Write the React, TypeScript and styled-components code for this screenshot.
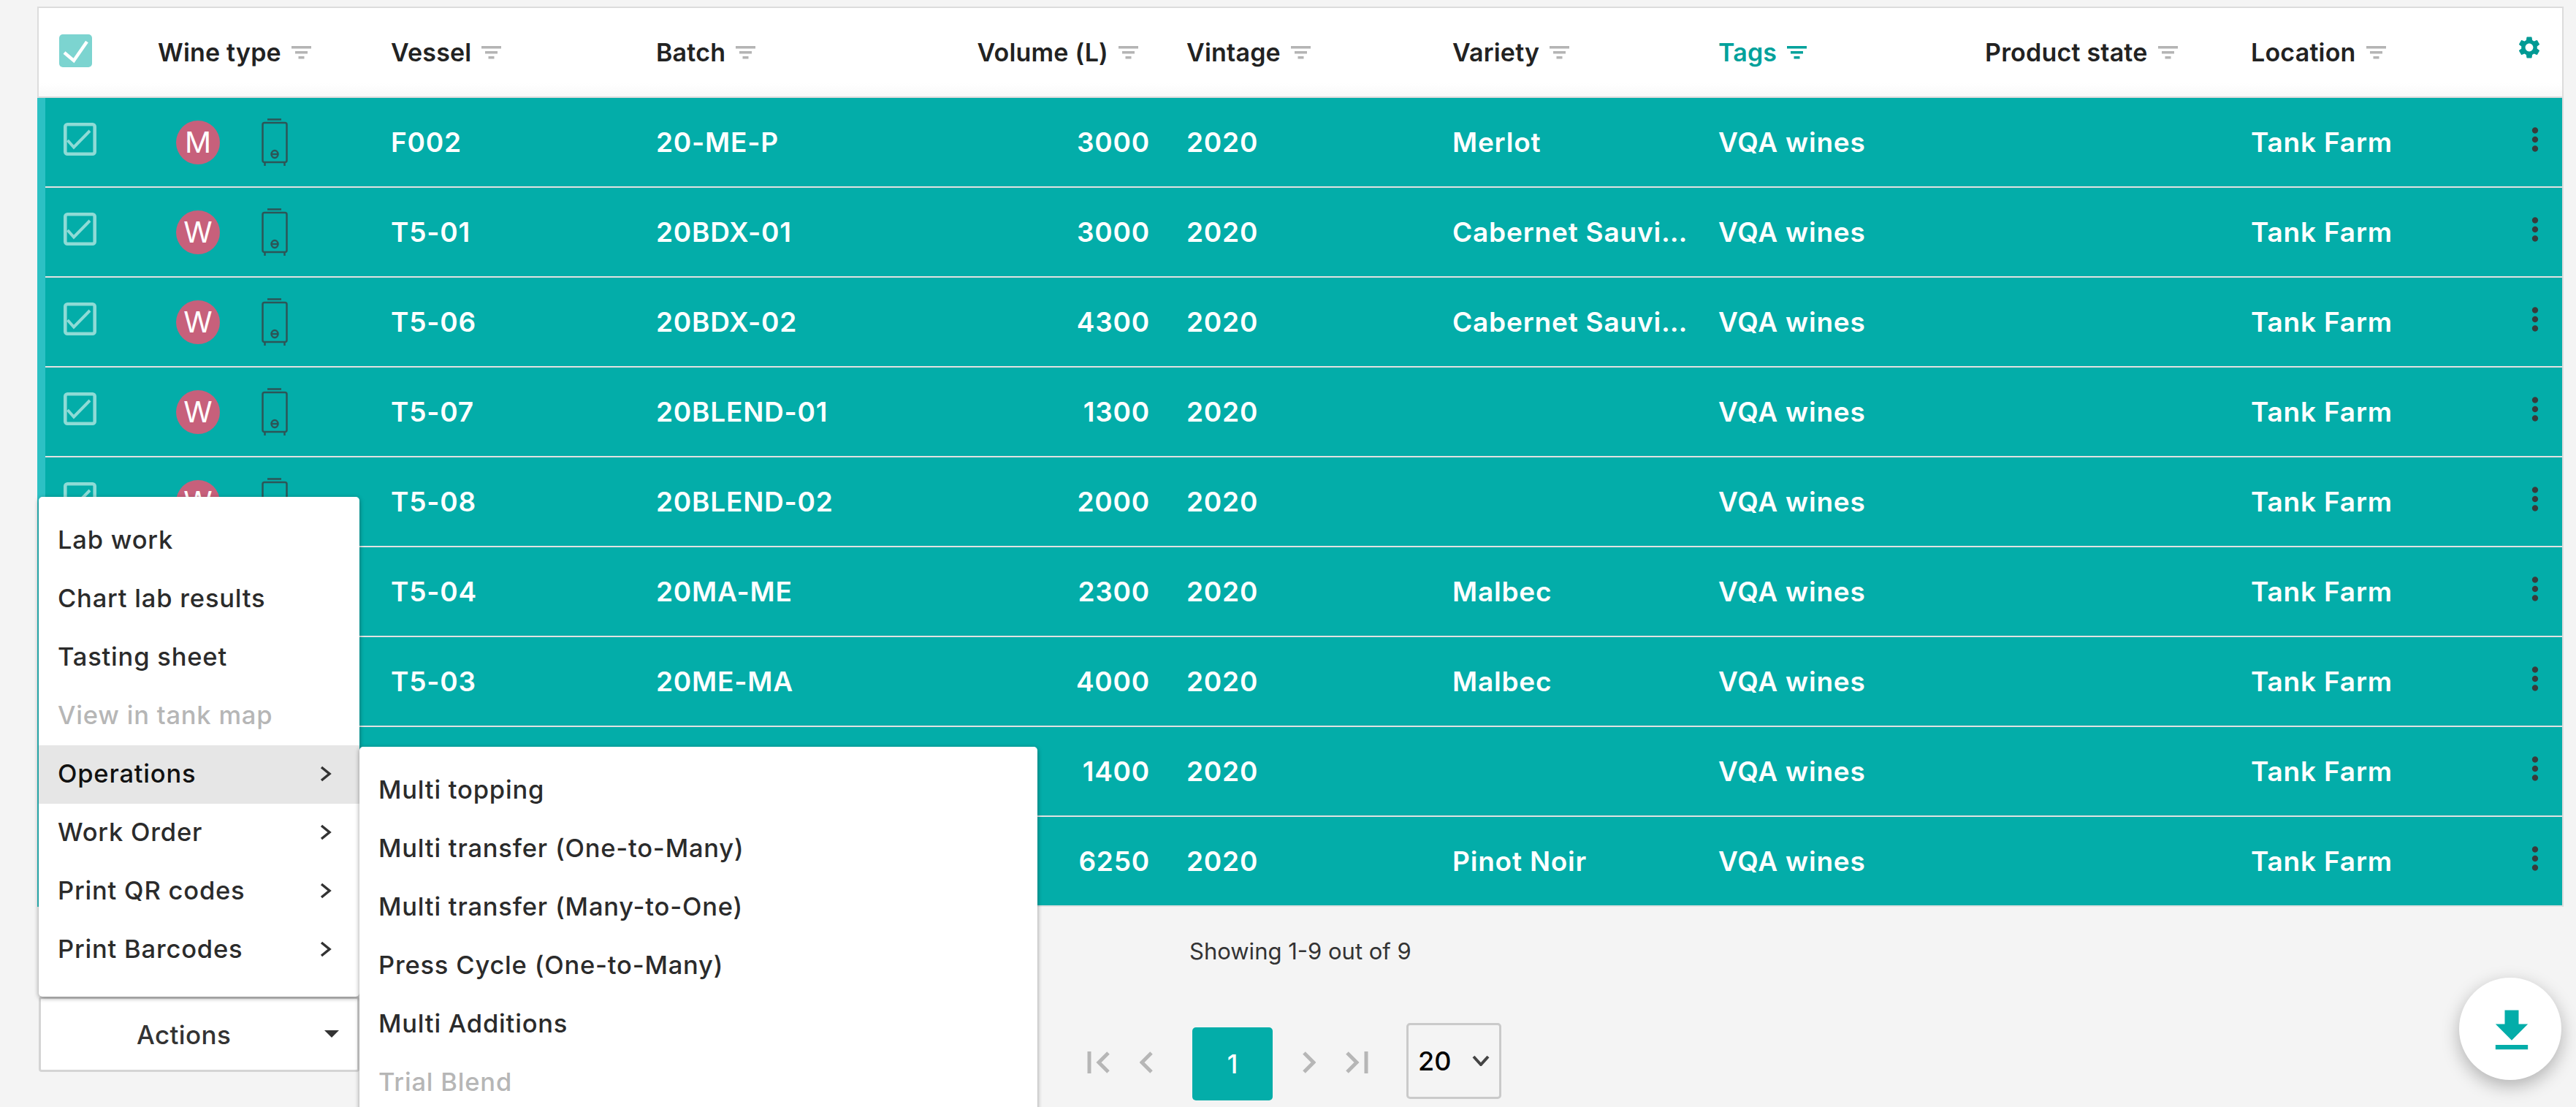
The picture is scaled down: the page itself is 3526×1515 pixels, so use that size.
import * as React from 'react';
import styled, { createGlobalStyle } from 'styled-components';
import { MdSettings, MdGetApp, MdMoreVert } from 'react-icons/md';

// =========================
// Data
// =========================

const teal = '#03ada9';

interface WineRow {
    letter: string;
    vessel: string;
    batch: string;
    volume: number;
    variety: string;
}

const rows: WineRow[] = [
    { letter: 'M', vessel: 'F002', batch: '20-ME-P', volume: 3000, variety: 'Merlot' },
    { letter: 'W', vessel: 'T5-01', batch: '20BDX-01', volume: 3000, variety: 'Cabernet Sauvignon' },
    { letter: 'W', vessel: 'T5-06', batch: '20BDX-02', volume: 4300, variety: 'Cabernet Sauvignon' },
    { letter: 'W', vessel: 'T5-07', batch: '20BLEND-01', volume: 1300, variety: '' },
    { letter: 'W', vessel: 'T5-08', batch: '20BLEND-02', volume: 2000, variety: '' },
    { letter: 'W', vessel: 'T5-04', batch: '20MA-ME', volume: 2300, variety: 'Malbec' },
    { letter: 'W', vessel: 'T5-03', batch: '20ME-MA', volume: 4000, variety: 'Malbec' },
    { letter: 'W', vessel: '', batch: '', volume: 1400, variety: '' },
    { letter: 'W', vessel: '', batch: '', volume: 6250, variety: 'Pinot Noir' },
];

const headers = ['Vessel', 'Batch', 'Volume (L)', 'Vintage', 'Variety', 'Tags', 'Product state', 'Location'];

const mainMenu = [
    { label: 'Lab work' },
    { label: 'Chart lab results' },
    { label: 'Tasting sheet' },
    { label: 'View in tank map', disabled: true },
    { label: 'Operations', arrow: true, active: true },
    { label: 'Work Order', arrow: true },
    { label: 'Print QR codes', arrow: true },
    { label: 'Print Barcodes', arrow: true },
];

const subMenu = [
    { label: 'Multi topping' },
    { label: 'Multi transfer (One-to-Many)' },
    { label: 'Multi transfer (Many-to-One)' },
    { label: 'Press Cycle (One-to-Many)' },
    { label: 'Multi Additions' },
    { label: 'Trial Blend', disabled: true },
];

// =========================
// Styled components — Page
// =========================

const GlobalStyle = createGlobalStyle`
  html, body {
    margin: 0;
    background: #f4f4f4;
  }

  * {
    box-sizing: border-box;
  }
`;

const Page = styled.div`
  position: relative;
  width: 3526px;
  height: 1515px;
  padding: 9px 17px 0 51px;
  overflow: hidden;
  background: #f4f4f4;
  font-family: Inter, "Liberation Sans", sans-serif;
  font-size: 35px;
  letter-spacing: 0.2px;
`;

// =========================
// Styled components — Table
// =========================

const dataColumns = '319px 363px 363px 363px 364px 364px 365px 364px 359px 1fr';

const HeaderRow = styled.div`
  display: grid;
  grid-template-columns: 163px ${dataColumns};
  height: 125px;
  border: 2px solid #dcdcdc;
  background: linear-gradient(#fff 85%, #f9f9f9);
`;

const HeaderCell = styled.div<{ $active?: boolean; $right?: boolean }>`
  display: flex;
  align-items: center;
  justify-content: ${({ $right }) => ($right ? 'flex-end' : 'flex-start')};
  gap: 14px;
  padding-right: ${({ $right }) => ($right ? '66px' : '0')};
  font-size: 34px;
  font-weight: 600;
  color: ${({ $active }) => ($active ? '#00a19b' : '#222')};
`;

const SelectCell = styled.div<{ $inset: number }>`
  display: flex;
  align-items: center;
  padding-left: ${({ $inset }) => $inset}px;
`;

const HeaderCheck = styled.div`
  width: 45px;
  height: 45px;
  margin-bottom: 4px;
  border-radius: 5px;
  background: #7cd4d0;
`;

const RowCheck = styled.svg`
  width: 45px;
  height: 45px;
  margin-bottom: 8px;
`;

const GearCell = styled.div`
  display: flex;
  align-items: center;
  padding: 0 0 14px 4px;
  color: #009a94;
`;

const Rows = styled.div`
  border-left: 11px solid #2cc1c4;
  border-right: 2px solid #dcdcdc;
`;

const Row = styled.div`
  display: grid;
  grid-template-columns: 154px ${dataColumns};
  height: 123px;
  border-bottom: 2px solid #e2e2e2;
  background: ${teal};
  color: #fff;
  font-size: 37px;
  font-weight: 600;
  letter-spacing: 0.8px;
`;

const Cell = styled.div<{ $right?: boolean }>`
  display: flex;
  align-items: center;
  justify-content: ${({ $right }) => ($right ? 'flex-end' : 'flex-start')};
  padding-right: ${({ $right }) => ($right ? '50px' : '0')};
  min-width: 0;
`;

const ClippedText = styled.span`
  display: block;
  max-width: 322px;
  overflow: hidden;
  white-space: nowrap;
  text-overflow: ellipsis;
`;

const WineCell = styled.div`
  display: flex;
  align-items: center;
  gap: 57px;
  padding-left: 25px;
`;

const Avatar = styled.div`
  display: flex;
  align-items: center;
  justify-content: center;
  width: 60px;
  height: 60px;
  border-radius: 50%;
  background: #c7607b;
  font-size: 40px;
  font-weight: 400;
  letter-spacing: 0;
`;

const DotsCell = styled.div`
  display: flex;
  align-items: center;
  padding: 0 0 8px 5px;
  color: #3a3a3a;
`;

// =========================
// Styled components — Footer
// =========================

const Footer = styled.div`
  display: flex;
`;

const ActionsArea = styled.div`
  position: relative;
  width: 439px;
  height: 103px;
  margin: 123px 0 0 2px;
`;

const ActionsButton = styled.div`
  display: flex;
  align-items: center;
  height: 100%;
  padding-left: 131px;
  border: 3px solid #d4d4d4;
  border-radius: 4px;
  background: #fff;
  color: #333;
  font-weight: 500;
  letter-spacing: 0.4px;
`;

const Caret = styled.div`
  position: absolute;
  left: 391px;
  top: 46px;
  width: 0;
  height: 0;
  border-left: 10px solid transparent;
  border-right: 10px solid transparent;
  border-top: 10px solid #333;
`;

const Menu = styled.div`
  position: absolute;
  left: 0;
  bottom: 100%;
  width: 100%;
  padding: 20px 0 24px;
  border-radius: 5px;
  background: #fff;
  box-shadow: 0 2px 6px rgba(0, 0, 0, 0.4);
`;

const MenuItem = styled.div<{ $disabled?: boolean; $active?: boolean }>`
  position: relative;
  display: flex;
  align-items: center;
  justify-content: space-between;
  height: 80px;
  padding: 0 38px 3px 26px;
  background: ${({ $active }) => ($active ? '#e6e6e6' : 'transparent')};
  color: ${({ $disabled, $active }) => ($disabled ? '#b6b6b6' : $active ? '#111' : '#2b2b2b')};
  font-size: 34.5px;
  font-weight: 500;
  letter-spacing: 0.8px;
`;

const SubMenu = styled.div`
  position: absolute;
  left: 100%;
  top: 2px;
  width: 928px;
  padding: 20px 0 30px;
  border-radius: 5px;
  background: #fff;
  box-shadow: 0 2px 6px rgba(0, 0, 0, 0.4);
`;

const Summary = styled.div`
  display: flex;
  flex-direction: column;
  margin-left: 996px;
`;

const ShowingText = styled.div`
  height: 40px;
  margin: 41px 0 78px 140px;
  color: #333;
  font-size: 31px;
  font-weight: 400;
  letter-spacing: 0;
  line-height: 40px;
`;

const Pager = styled.div`
  display: flex;
  align-items: center;
  gap: 40px;
  height: 104px;
`;

const NavIcon = styled.svg`
  margin-top: 4px;
  fill: none;
  stroke: #b6b6b6;
  stroke-width: 5;
`;

const PageButton = styled.div`
  display: flex;
  align-items: center;
  justify-content: center;
  width: 110px;
  height: 100px;
  margin: 8px 1px 0 14px;
  border-radius: 5px;
  background: ${teal};
  color: #fff;
  font-weight: 500;
`;

const PageSizeWrap = styled.div`
  position: relative;
  margin-left: 12px;
`;

const PageSize = styled.select`
  display: block;
  width: 130px;
  height: 104px;
  padding: 0 0 0 13px;
  border: 3px solid #cacaca;
  border-radius: 5px;
  background: transparent;
  color: #000;
  font: 500 36px Inter, "Liberation Sans", sans-serif;
  appearance: none;
  -webkit-appearance: none;
  outline: none;
`;

const PageSizeArrow = styled.svg`
  position: absolute;
  right: 16px;
  top: 44px;
  fill: none;
  stroke: #444;
  stroke-width: 4;
  pointer-events: none;
`;

const DownloadButton = styled.div`
  position: absolute;
  right: 20px;
  bottom: 37px;
  display: flex;
  align-items: center;
  justify-content: center;
  width: 140px;
  height: 140px;
  padding: 5px 0 0 4px;
  border-radius: 50%;
  background: #fff;
  color: ${teal};
  box-shadow: 0 8px 24px rgba(0, 0, 0, 0.28);
`;

// =========================
// Icons
// =========================

const FilterIcon = ({ color = '#b4b4b4' }: { color?: string }) => (
    <svg width="27" height="18" viewBox="0 0 27 18">
        <rect x="0" y="0" width="27" height="3.5" fill={color} />
        <rect x="5" y="7" width="17" height="3.5" fill={color} />
        <rect x="9.5" y="14" width="8" height="3.5" fill={color} />
    </svg>
);

const TankIcon = () => (
    <svg width="36" height="65" viewBox="0 0 36 65" fill="none" stroke="#2d5557" strokeWidth="2.5">
        <path d="M8 1.5h19" />
        <rect x="1.5" y="6" width="33" height="54" rx="2.5" />
        <path d="M4.5 60v5M31.5 60v5" />
        <ellipse cx="18" cy="49" rx="4.5" ry="5" />
        <path d="M13.5 49h9" />
    </svg>
);

const ChevronRight = () => (
    <svg width="16" height="22" viewBox="0 0 16 22" fill="none" stroke="#333" strokeWidth="3.5">
        <path d="M2 2l11 9-11 9" />
    </svg>
);

// =========================
// Component
// =========================

export default function App() {
    return (
        <Page>
            <GlobalStyle />
            <HeaderRow>
                <SelectCell $inset={28}>
                    <HeaderCheck>
                        <svg width="45" height="45" viewBox="0 0 45 45">
                            <path d="M7 25l13 11L38 10" fill="none" stroke="#fff" strokeWidth="4.5" />
                        </svg>
                    </HeaderCheck>
                </SelectCell>
                <HeaderCell>
                    Wine type
                    <FilterIcon />
                </HeaderCell>
                {headers.map((name) => (
                    <HeaderCell key={name} $active={name === 'Tags'} $right={name === 'Volume (L)'}>
                        {name}
                        <FilterIcon color={name === 'Tags' ? '#00a19b' : undefined} />
                    </HeaderCell>
                ))}
                <GearCell>
                    <MdSettings size={36} />
                </GearCell>
            </HeaderRow>

            <Rows>
                {rows.map((row, index) => (
                    <Row key={index}>
                        <SelectCell $inset={25}>
                            <RowCheck viewBox="0 0 45 45">
                                <rect x="2.3" y="2.3" width="40.4" height="40.4" rx="3" fill="none" stroke="#8edbd6" strokeWidth="4.6" />
                                <path d="M5.5 24l8.5 9.5L36 11" fill="none" stroke="#8edbd6" strokeWidth="4" />
                            </RowCheck>
                        </SelectCell>
                        <WineCell>
                            <Avatar>{row.letter}</Avatar>
                            <TankIcon />
                        </WineCell>
                        <Cell>{row.vessel}</Cell>
                        <Cell>{row.batch}</Cell>
                        <Cell $right>{row.volume}</Cell>
                        <Cell>2020</Cell>
                        <Cell>
                            <ClippedText>{row.variety}</ClippedText>
                        </Cell>
                        <Cell>VQA wines</Cell>
                        <Cell />
                        <Cell>Tank Farm</Cell>
                        <DotsCell>
                            <MdMoreVert size={50} />
                        </DotsCell>
                    </Row>
                ))}
            </Rows>

            <Footer>
                <ActionsArea>
                    <Menu>
                        {mainMenu.map((item) => (
                            <MenuItem key={item.label} $disabled={item.disabled} $active={item.active}>
                                {item.label}
                                {item.arrow && <ChevronRight />}
                                {item.active && (
                                    <SubMenu>
                                        {subMenu.map((sub) => (
                                            <MenuItem key={sub.label} $disabled={sub.disabled}>
                                                {sub.label}
                                            </MenuItem>
                                        ))}
                                    </SubMenu>
                                )}
                            </MenuItem>
                        ))}
                    </Menu>
                    <ActionsButton>Actions</ActionsButton>
                    <Caret />
                </ActionsArea>

                <Summary>
                    <ShowingText>Showing 1-9 out of 9</ShowingText>
                    <Pager>
                        <NavIcon width="32" height="30" viewBox="0 0 32 30">
                            <path d="M3 0v30M29 2L16 15l13 13" />
                        </NavIcon>
                        <NavIcon width="18" height="30" viewBox="0 0 18 30">
                            <path d="M16 2L3 15l13 13" />
                        </NavIcon>
                        <PageButton>1</PageButton>
                        <NavIcon width="18" height="30" viewBox="0 0 18 30">
                            <path d="M2 2l13 13L2 28" />
                        </NavIcon>
                        <NavIcon width="32" height="30" viewBox="0 0 32 30">
                            <path d="M29 0v30M3 2l13 13L3 28" />
                        </NavIcon>
                        <PageSizeWrap>
                            <PageSize defaultValue="20">
                                <option value="20">20</option>
                                <option value="50">50</option>
                                <option value="100">100</option>
                            </PageSize>
                            <PageSizeArrow width="24" height="15" viewBox="0 0 24 15">
                                <path d="M2 2l10 11L22 2" />
                            </PageSizeArrow>
                        </PageSizeWrap>
                    </Pager>
                </Summary>
            </Footer>

            <DownloadButton>
                <MdGetApp size={76} />
            </DownloadButton>
        </Page>
    );
}
